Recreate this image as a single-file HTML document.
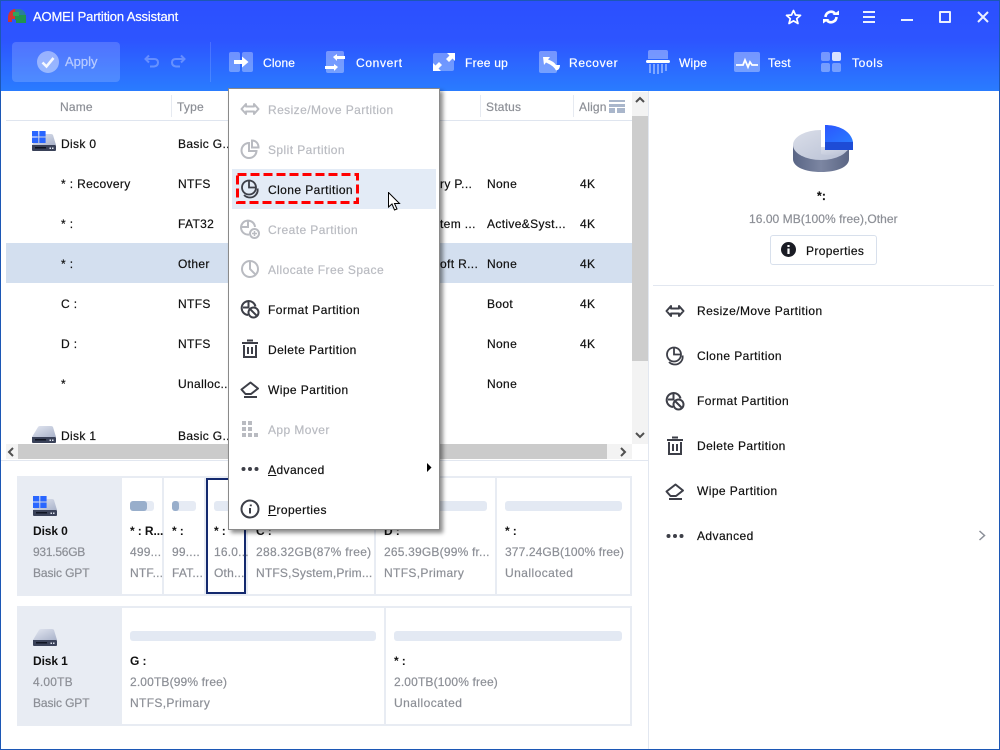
<!DOCTYPE html>
<html><head><meta charset="utf-8">
<style>
html,body{margin:0;padding:0;background:#fff}
#r{position:relative;width:1000px;height:750px;overflow:hidden;background:#fff;font-family:"Liberation Sans",sans-serif;font-size:12px;color:#111;letter-spacing:.35px;-webkit-text-stroke:.2px currentColor}
#r div,#r svg{position:absolute}
.t{white-space:nowrap;line-height:16px;height:16px}
.w{color:#fff;font-size:12px;letter-spacing:.65px}
.g{color:#8c8f96;letter-spacing:.2px}
.d{color:#b9bbc1}
.m{letter-spacing:.42px}
.b{font-weight:bold;letter-spacing:-.1px;-webkit-text-stroke:0}
u{text-underline-offset:1px}
</style></head><body>
<div id="r">
<svg width="0" height="0" style="position:absolute">
<defs>
<symbol id="resize" viewBox="0 0 20 20"><path d="M6 5 1.500 10 6 15V12.500H14V15L18.500 10 14 5V7.500H6Z" fill="none" stroke="currentColor" stroke-width="2" stroke-linejoin="round"/></symbol>
<symbol id="clone" viewBox="0 0 20 20"><g fill="none" stroke="currentColor" stroke-width="1.800"><circle cx="9" cy="8.500" r="7"/><path d="M9 2V8.500H15.500"/><path d="M17.500 9.500C18.500 14 15 18.500 10 18.500 7.500 18.500 5.500 17.500 4 16"/></g></symbol>
<symbol id="split" viewBox="0 0 20 20"><g fill="none" stroke="currentColor" stroke-width="2"><path d="M9 4A7.500 7.500 0 1 0 16.500 12H9Z"/><path d="M12 1.500V8.500H18.500C18.500 4.500 16 1.500 12 1.500Z"/></g></symbol>
<symbol id="create" viewBox="0 0 20 20"><g fill="none" stroke="currentColor" stroke-width="2"><path d="M8 1.500V8H1.500"/><path d="M9 15.500A7 7 0 1 1 15 8"/><circle cx="14.500" cy="14.500" r="4.500"/><path d="M14.500 12V17M12 14.500H17" stroke-width="1.500"/></g></symbol>
<symbol id="alloc" viewBox="0 0 20 20"><g fill="none" stroke="currentColor" stroke-width="2"><circle cx="10" cy="10" r="8"/><path d="M10 2V10L15.500 15.500"/></g></symbol>
<symbol id="format" viewBox="0 0 20 20"><g fill="none" stroke="currentColor" stroke-width="2"><path d="M8 16A7 7 0 1 1 15.500 7.500"/><path d="M8.500 1.500V8.500H3"/><circle cx="13.500" cy="13.500" r="5"/><path d="M10 10 17 17"/></g></symbol>
<symbol id="del" viewBox="0 0 20 20"><g fill="none" stroke="currentColor" stroke-width="2"><path d="M2 4H18"/><path d="M7 1.500H13"/><path d="M4 6V18H16V6"/><path d="M8 8V15M12 8V15"/></g></symbol>
<symbol id="wipe" viewBox="0 0 20 20"><g fill="none" stroke="currentColor" stroke-width="2" stroke-linejoin="round"><path d="M1.500 10.500 10.500 3.500 18 9.500 11 15H5.500Z"/><path d="M4 18H17"/></g></symbol>
<symbol id="dots" viewBox="0 0 20 20"><g fill="currentColor"><circle cx="3.500" cy="10" r="2"/><circle cx="10" cy="10" r="2"/><circle cx="16.500" cy="10" r="2"/></g></symbol>
<symbol id="info" viewBox="0 0 20 20"><circle cx="10" cy="10" r="8.500" fill="none" stroke="currentColor" stroke-width="2"/><path d="M10.800 5.500V7.200M10 9V14.500" stroke="currentColor" stroke-width="2"/></symbol>
<symbol id="app" viewBox="0 0 20 20"><g fill="currentColor"><rect x="2" y="2" width="4" height="4"/><rect x="8" y="2" width="4" height="4"/><rect x="2" y="8" width="4" height="4"/><rect x="8" y="8" width="4" height="4"/><rect x="14" y="14" width="4" height="4"/><rect x="2" y="14" width="4" height="4"/><rect x="8" y="14" width="4" height="4"/></g></symbol>
<linearGradient id="disk" x1="0" y1="0" x2="1" y2="1"><stop offset="0" stop-color="#e4e8f2"/><stop offset="1" stop-color="#a9b2c9"/></linearGradient>
<symbol id="hdd" viewBox="0 0 24 20"><path d="M6 2Q6.500 1 8 1H19Q20.500 1 21 2L24 12H0Z" fill="url(#disk)"/><path d="M0 12Q0 12 1 12H23Q24 12 24 13V17Q24 18 23 18H1Q0 18 0 17Z" fill="#3a4259"/><rect x="3" y="14" width="11" height="1.500" fill="#0f1422"/><rect x="17.500" y="14.500" width="1.500" height="1.500" fill="#dfe4ef"/><rect x="20" y="14.500" width="1.500" height="1.500" fill="#dfe4ef"/></symbol>
<symbol id="win" viewBox="0 0 14 12"><g fill="#2a66ff"><rect width="6.300" height="5.500"/><rect x="7.300" width="6.300" height="5.500"/><rect y="6.500" width="6.300" height="5.500"/><rect x="7.300" y="6.500" width="6.300" height="5.500"/></g></symbol>
<linearGradient id="pieg" x1="0" y1="0" x2="1" y2="1"><stop offset="0" stop-color="#dadee9"/><stop offset="1" stop-color="#b8c0d4"/></linearGradient>
<linearGradient id="pies" x1="0" y1="0" x2="1" y2="0"><stop offset="0" stop-color="#596585"/><stop offset=".5" stop-color="#7c86a2"/><stop offset="1" stop-color="#5b6684"/></linearGradient>
<linearGradient id="pieb" x1="0" y1="0" x2="1" y2="1"><stop offset="0" stop-color="#2b56ff"/><stop offset="1" stop-color="#2a7bff"/></linearGradient>
</defs>
</svg>

<!-- header -->
<div style="left:0;top:0;width:1000px;height:91px;background:linear-gradient(#2c4fff 0,#2d55ff 45%,#2a7cff 100%)"></div>
<div style="left:0;top:0;width:1000px;height:1px;background:#1c57b5"></div>
<div style="left:0;top:0;width:1px;height:750px;background:#1c57b5"></div>
<div style="left:999px;top:0;width:1px;height:750px;background:#1c57b5"></div>
<div style="left:0;top:749px;width:1000px;height:1px;background:#1c57b5"></div>

<svg style="left:7px;top:8px" width="20" height="17" viewBox="0 0 20 17"><path d="M1 10Q1 3 7 1H10V11H5V14H1Z" fill="#d3352f"/><path d="M8 1H13Q18 2 19 8H9Z" fill="#2a7f9a"/><path d="M8 7H19V15H9V12H8Z" fill="#21934f"/><path d="M6 4H12V8H6Z" fill="#31a35c"/></svg>
<div class="t" style="left:33px;top:9px;color:#fff;font-size:13px;letter-spacing:-.15px">AOMEI Partition Assistant</div>

<div style="left:12px;top:42px;width:108px;height:40px;border-radius:4px;background:rgba(255,255,255,.17)"></div>
<svg style="left:37px;top:51px" width="22" height="22" viewBox="0 0 22 22"><circle cx="11" cy="11" r="11" fill="#fff" fill-opacity=".42"/><path d="M5.500 11.500 9.500 15.500 16.500 7" fill="none" stroke="#fff" stroke-opacity=".9" stroke-width="2.600"/></svg>
<div class="t w" style="left:65px;top:54px;color:rgba(255,255,255,.55);font-size:13px;letter-spacing:0">Apply</div>
<svg style="left:144px;top:54px" width="16" height="14" viewBox="0 0 16 14"><path d="M5 1.500 1.500 5 5 8.500M2 5H10Q14 5 14 8.500T10 12.500H6" fill="none" stroke="#fff" stroke-opacity=".28" stroke-width="2"/></svg>
<svg style="left:170px;top:54px" width="16" height="14" viewBox="0 0 16 14"><path d="M11 1.500 14.500 5 11 8.500M14 5H6Q2 5 2 8.500T6 12.500H10" fill="none" stroke="#fff" stroke-opacity=".28" stroke-width="2"/></svg>
<div style="left:210px;top:42px;width:1px;height:40px;background:rgba(255,255,255,.14)"></div>

<!-- toolbar icons -->
<svg style="left:229px;top:52px" width="24" height="20" viewBox="0 0 24 20"><rect width="11" height="20" rx="2" fill="#fff" fill-opacity=".32"/><rect x="13" width="11" height="20" rx="2" fill="#fff" fill-opacity=".32"/><path d="M5 8H13V4.500L19.500 10 13 15.500V12H5Z" fill="#fff"/></svg>
<div class="t w" style="left:263px;top:55px;letter-spacing:.15px">Clone</div>
<svg style="left:325px;top:51px" width="21" height="22" viewBox="0 0 21 22"><rect x="1" width="18" height="22" rx="2" fill="#fff" fill-opacity=".35"/><path d="M8 6 12 3V5H20V8H12V10Z" fill="#fff"/><path d="M13 16 9 13V15H0V18H9V20Z" fill="#fff"/></svg>
<div class="t w" style="left:356px;top:55px">Convert</div>
<svg style="left:433px;top:53px" width="22" height="18" viewBox="0 0 22 18"><rect width="21" height="18" rx="2" x="0" y="0" fill="#fff" fill-opacity=".32"/><path d="M0 18V10L2.500 12.500 6 9 9 12 5.500 15.500 8 18ZM22 0V8L19.500 5.500 16 9 13 6 16.500 2.500 14 0Z" fill="#fff"/></svg>
<div class="t w" style="left:465px;top:55px;letter-spacing:.25px">Free up</div>
<svg style="left:539px;top:51px" width="22" height="22" viewBox="0 0 22 22"><rect width="18" height="22" rx="2" fill="#fff" fill-opacity=".35"/><path d="M4 6H11L9 8.500Q15 10.500 17 14H21Q21 19 17 19.500 15 15 7 11.500L5 14Z" fill="#fff"/></svg>
<div class="t w" style="left:569px;top:55px">Recover</div>
<svg style="left:646px;top:50px" width="24" height="24" viewBox="0 0 24 24"><path d="M2 2Q2 0 4 0H20Q22 0 22 2V9H2Z" fill="#fff" fill-opacity=".35"/><rect y="10" width="24" height="3" rx="1.500" fill="#fff"/><g fill="#fff" fill-opacity=".4"><rect x="3" y="14" width="2" height="9"/><rect x="7" y="14" width="2" height="10"/><rect x="11" y="14" width="2" height="10"/><rect x="15" y="14" width="2" height="9"/><rect x="19" y="14" width="2" height="7"/></g></svg>
<div class="t w" style="left:679px;top:55px;letter-spacing:.2px">Wipe</div>
<svg style="left:734px;top:52px" width="26" height="20" viewBox="0 0 26 20"><rect width="26" height="20" rx="2" fill="#fff" fill-opacity=".35"/><path d="M2 13H9L11 8 14 15 16 10 18 13H24" fill="none" stroke="#fff" stroke-width="1.800"/></svg>
<div class="t w" style="left:768px;top:55px;letter-spacing:.2px">Test</div>
<svg style="left:821px;top:52px" width="20" height="20" viewBox="0 0 20 20"><rect width="9" height="9" rx="2" fill="#fff" fill-opacity=".35"/><rect x="11" width="9" height="9" rx="2" fill="#fff" fill-opacity=".82"/><rect y="11" width="9" height="9" rx="2" fill="#fff" fill-opacity=".35"/><rect x="11" y="11" width="9" height="9" rx="2" fill="#fff" fill-opacity=".35"/></svg>
<div class="t w" style="left:852px;top:55px">Tools</div>

<!-- window controls -->
<svg style="left:785px;top:9px" width="17" height="16" viewBox="0 0 17 16"><path d="M8.500 1.500 10.500 6 15.500 6.400 11.700 9.600 13 14.500 8.500 11.900 4 14.500 5.300 9.600 1.500 6.400 6.500 6Z" fill="none" stroke="#fff" stroke-width="1.700" stroke-linejoin="round"/></svg>
<svg style="left:823px;top:9px" width="16" height="16" viewBox="0 0 16 16"><g fill="none" stroke="#fff" stroke-width="2.600"><path d="M2.500 8A5.500 5.500 0 0 1 12 4.500"/><path d="M13.500 8A5.500 5.500 0 0 1 4 11.500"/></g><path d="M9.500 6H16V1.500ZM6.500 10H0V14.500Z" fill="#fff"/></svg>
<div style="left:863px;top:11px;width:12px;height:2px;background:#eaf0ff"></div>
<div style="left:863px;top:16px;width:12px;height:2px;background:#eaf0ff"></div>
<div style="left:863px;top:21px;width:12px;height:2px;background:#eaf0ff"></div>
<div style="left:901px;top:19px;width:12px;height:2px;background:#eaf0ff"></div>
<div style="left:939px;top:11px;width:8px;height:8px;border:2px solid #eaf0ff;border-radius:1px"></div>
<svg style="left:977px;top:11px" width="12" height="12" viewBox="0 0 12 12"><path d="M1 1 11 11M11 1 1 11" stroke="#eaf0ff" stroke-width="2"/></svg>

<!-- table header -->
<div style="left:6px;top:120px;width:626px;height:1px;background:#dfe5ef"></div>
<div style="left:171px;top:95px;width:1px;height:22px;background:#e6eaf1"></div>
<div style="left:480px;top:95px;width:1px;height:22px;background:#e6eaf1"></div>
<div style="left:573px;top:95px;width:1px;height:22px;background:#e6eaf1"></div>
<div class="t g" style="left:60px;top:99px">Name</div>
<div class="t g" style="left:177px;top:99px">Type</div>
<div class="t g" style="left:486px;top:99px">Status</div>
<div class="t g" style="left:579px;top:99px;width:27px;overflow:hidden">Align</div>
<div style="left:609px;top:100px;width:16px;height:2px;background:#a9b6cb"></div>
<div style="left:609px;top:104px;width:16px;height:3px;background:#a9b6cb"></div>
<div style="left:609px;top:108px;width:6px;height:5px;background:#a9b6cb"></div>
<div style="left:617px;top:108px;width:8px;height:5px;background:#a9b6cb"></div>

<!-- rows -->
<div style="left:6px;top:243px;width:626px;height:40px;background:#d3dfef"></div>
<svg style="left:32px;top:133px" width="24" height="20" viewBox="0 0 24 20"><use href="#hdd"/></svg>
<svg style="left:32px;top:131px" width="14" height="12" viewBox="0 0 14 12"><use href="#win"/></svg>
<div class="t" style="left:61px;top:136px">Disk 0</div><div class="t" style="left:178px;top:136px">Basic G...</div>
<div class="t" style="left:61px;top:176px">* : Recovery</div><div class="t" style="left:178px;top:176px">NTFS</div>
<div class="t" style="left:61px;top:216px">* :</div><div class="t" style="left:178px;top:216px">FAT32</div>
<div class="t" style="left:61px;top:256px">* :</div><div class="t" style="left:178px;top:256px">Other</div>
<div class="t" style="left:61px;top:296px">C :</div><div class="t" style="left:178px;top:296px">NTFS</div>
<div class="t" style="left:61px;top:336px">D :</div><div class="t" style="left:178px;top:336px">NTFS</div>
<div class="t" style="left:61px;top:376px">*</div><div class="t" style="left:178px;top:376px">Unalloc...</div>
<svg style="left:32px;top:425px" width="24" height="20" viewBox="0 0 24 20"><use href="#hdd"/></svg>
<div class="t" style="left:61px;top:428px">Disk 1</div><div class="t" style="left:178px;top:428px">Basic G...</div>
<div class="t" style="left:440px;top:176px">ry P...</div><div class="t" style="left:487px;top:176px">None</div><div class="t" style="left:580px;top:176px">4K</div>
<div class="t" style="left:440px;top:216px">tem ...</div><div class="t" style="left:487px;top:216px">Active&amp;Syst...</div><div class="t" style="left:580px;top:216px">4K</div>
<div class="t" style="left:440px;top:256px">oft R...</div><div class="t" style="left:487px;top:256px">None</div><div class="t" style="left:580px;top:256px">4K</div>
<div class="t" style="left:487px;top:296px">Boot</div><div class="t" style="left:580px;top:296px">4K</div>
<div class="t" style="left:487px;top:336px">None</div><div class="t" style="left:580px;top:336px">4K</div>
<div class="t" style="left:487px;top:376px">None</div>

<!-- scrollbars -->
<div style="left:632px;top:92px;width:16px;height:352px;background:#f3f3f3"></div>
<div style="left:632px;top:116px;width:16px;height:245px;background:#cdcdcd"></div>
<svg style="left:635px;top:96px" width="10" height="8" viewBox="0 0 10 8"><path d="M1 6 5 2 9 6" fill="none" stroke="#505050" stroke-width="2"/></svg>
<svg style="left:635px;top:431px" width="10" height="8" viewBox="0 0 10 8"><path d="M1 2 5 6 9 2" fill="none" stroke="#505050" stroke-width="2"/></svg>
<div style="left:6px;top:444px;width:626px;height:15px;background:#f3f3f3"></div>
<div style="left:18px;top:444px;width:589px;height:15px;background:#cbcbcb"></div>
<svg style="left:7px;top:447px" width="8" height="10" viewBox="0 0 8 10"><path d="M6 1 2 5 6 9" fill="none" stroke="#505050" stroke-width="2"/></svg>
<svg style="left:619px;top:447px" width="8" height="10" viewBox="0 0 8 10"><path d="M2 1 6 5 2 9" fill="none" stroke="#505050" stroke-width="2"/></svg>
<div style="left:1px;top:460px;width:647px;height:1px;background:#e2e7f0"></div>
<div style="left:648px;top:91px;width:1px;height:658px;background:#e2e7f0"></div>

<!-- disk 0 map -->
<div style="left:17px;top:476px;width:615px;height:120px;background:#e8ecf3"></div>
<div style="left:122px;top:478px;width:40px;height:116px;background:#fff"></div>
<div style="left:164px;top:478px;width:40px;height:116px;background:#fff"></div>
<div style="left:206px;top:478px;width:36px;height:112px;background:#fff;border:2px solid #14296e"></div>
<div style="left:248px;top:478px;width:126px;height:116px;background:#fff"></div>
<div style="left:376px;top:478px;width:119px;height:116px;background:#fff"></div>
<div style="left:497px;top:478px;width:133px;height:116px;background:#fff"></div>
<svg style="left:33px;top:498px" width="24" height="20" viewBox="0 0 24 20"><use href="#hdd"/></svg>
<svg style="left:33px;top:496px" width="14" height="12" viewBox="0 0 14 12"><use href="#win"/></svg>
<div class="t b" style="left:33px;top:523px">Disk 0</div>
<div class="t g" style="left:33px;top:544px;letter-spacing:-.25px">931.56GB</div>
<div class="t g" style="left:33px;top:565px;letter-spacing:-.1px">Basic GPT</div>

<div style="left:130px;top:501px;width:24px;height:10px;border-radius:3px;background:#e6ebf4"></div><div style="left:130px;top:501px;width:17px;height:10px;border-radius:3px;background:#98aecb"></div>
<div style="left:172px;top:501px;width:24px;height:10px;border-radius:3px;background:#e6ebf4"></div><div style="left:172px;top:501px;width:7px;height:10px;border-radius:3px;background:#98aecb"></div>
<div style="left:214px;top:501px;width:24px;height:10px;border-radius:3px;background:#e3e9f3"></div>
<div style="left:256px;top:501px;width:110px;height:10px;border-radius:3px;background:#e3e9f3"></div>
<div style="left:384px;top:501px;width:103px;height:10px;border-radius:3px;background:#e3e9f3"></div>
<div style="left:505px;top:501px;width:117px;height:10px;border-radius:3px;background:#e3e9f3"></div>

<div class="t b" style="left:130px;top:523px">* : R...</div>
<div class="t g" style="left:130px;top:544px">499...</div><div class="t g" style="left:130px;top:565px">NTF...</div>
<div class="t b" style="left:172px;top:523px">* :</div>
<div class="t g" style="left:172px;top:544px">99....</div><div class="t g" style="left:172px;top:565px">FAT...</div>
<div class="t b" style="left:214px;top:523px">* :</div>
<div class="t g" style="left:214px;top:544px">16.0...</div><div class="t g" style="left:214px;top:565px">Oth...</div>
<div class="t b" style="left:256px;top:523px">C :</div>
<div class="t g" style="left:256px;top:544px;letter-spacing:.3px">288.32GB(87% free)</div><div class="t g" style="left:256px;top:565px;letter-spacing:.2px">NTFS,System,Prim...</div>
<div class="t b" style="left:384px;top:523px">D :</div>
<div class="t g" style="left:384px;top:544px;letter-spacing:.2px">265.39GB(99% fr...</div><div class="t g" style="left:384px;top:565px;letter-spacing:.35px">NTFS,Primary</div>
<div class="t b" style="left:505px;top:523px">* :</div>
<div class="t g" style="left:505px;top:544px;letter-spacing:.12px">377.24GB(100% free)</div><div class="t g" style="left:505px;top:565px;letter-spacing:.45px">Unallocated</div>

<!-- disk 1 map -->
<div style="left:17px;top:606px;width:615px;height:120px;background:#e8ecf3"></div>
<div style="left:122px;top:608px;width:262px;height:116px;background:#fff"></div>
<div style="left:386px;top:608px;width:244px;height:116px;background:#fff"></div>
<svg style="left:33px;top:628px" width="24" height="20" viewBox="0 0 24 20"><use href="#hdd"/></svg>
<div class="t b" style="left:33px;top:653px">Disk 1</div>
<div class="t g" style="left:33px;top:674px">4.00TB</div>
<div class="t g" style="left:33px;top:695px;letter-spacing:-.1px">Basic GPT</div>
<div style="left:130px;top:631px;width:246px;height:10px;border-radius:3px;background:#e3e9f3"></div>
<div style="left:394px;top:631px;width:228px;height:10px;border-radius:3px;background:#e3e9f3"></div>
<div class="t b" style="left:130px;top:653px">G :</div>
<div class="t g" style="left:130px;top:674px;letter-spacing:.15px">2.00TB(99% free)</div><div class="t g" style="left:130px;top:695px;letter-spacing:.35px">NTFS,Primary</div>
<div class="t b" style="left:394px;top:653px">* :</div>
<div class="t g" style="left:394px;top:674px;letter-spacing:.15px">2.00TB(100% free)</div><div class="t g" style="left:394px;top:695px;letter-spacing:.45px">Unallocated</div>

<!-- right panel -->
<svg style="left:790px;top:124px" width="66" height="52" viewBox="0 0 66 52">
<path d="M3 21V35C3 43 15 48 31 48S59 43 59 35V21Z" fill="url(#pies)"/>
<ellipse cx="31" cy="21" rx="28" ry="15" fill="url(#pieg)"/>
<path d="M31 2V23H65V10Z" fill="#fff"/>
<path d="M31 23H59V25C52 32 38 32 31 30Z" fill="url(#pieg)"/>
<path d="M35 1C49 1 61 7 63 18H35Z" fill="url(#pieb)"/>
<path d="M35 18H63V26H35Z" fill="#1e4cd6"/>
<rect x="31" y="1" width="4" height="22" fill="#fff"/>
</svg>
<div class="t" style="left:817px;top:188px;font-weight:bold;letter-spacing:.2px">*:</div>
<div class="t g" style="left:749px;top:211px;letter-spacing:.05px">16.00 MB(100% free),Other</div>
<div style="left:770px;top:235px;width:105px;height:28px;border:1px solid #d8e0ec;border-radius:3px"></div>
<svg style="left:781px;top:242px" width="15" height="15" viewBox="0 0 15 15"><circle cx="7.500" cy="7.500" r="7.500" fill="#1a1c24"/><path d="M7.500 3V5M7.500 6.500V12" stroke="#fff" stroke-width="2.200"/></svg>
<div class="t" style="left:806px;top:243px">Properties</div>
<div style="left:653px;top:285px;width:341px;height:1px;background:#e2e7f0"></div>

<svg style="left:665px;top:301px;color:#3d3f48" width="20" height="20"><use href="#resize"/></svg><div class="t m" style="left:697px;top:303px">Resize/Move Partition</div>
<svg style="left:665px;top:346px;color:#3d3f48" width="20" height="20"><use href="#clone"/></svg><div class="t m" style="left:697px;top:348px">Clone Partition</div>
<svg style="left:665px;top:391px;color:#3d3f48" width="20" height="20"><use href="#format"/></svg><div class="t m" style="left:697px;top:393px">Format Partition</div>
<svg style="left:665px;top:436px;color:#3d3f48" width="20" height="20"><use href="#del"/></svg><div class="t m" style="left:697px;top:438px">Delete Partition</div>
<svg style="left:665px;top:481px;color:#3d3f48" width="20" height="20"><use href="#wipe"/></svg><div class="t m" style="left:697px;top:483px">Wipe Partition</div>
<svg style="left:665px;top:526px;color:#3d3f48" width="20" height="20"><use href="#dots"/></svg><div class="t m" style="left:697px;top:528px">Advanced</div>
<svg style="left:978px;top:530px" width="8" height="11" viewBox="0 0 8 11"><path d="M1.500 1 6.500 5.500 1.500 10" fill="none" stroke="#8b8f98" stroke-width="1.500"/></svg>

<!-- context menu -->
<div style="left:228px;top:88px;width:210px;height:440px;background:#fff;border:1px solid #8a8a8a;box-shadow:3px 3px 4px rgba(0,0,0,.45)"></div>
<div style="left:232px;top:169px;width:204px;height:40px;background:#e3ebf6"></div>
<svg style="left:236px;top:173px" width="124" height="32" viewBox="0 0 124 32"><rect x="1.500" y="1.500" width="120" height="28" fill="none" stroke="#ff0000" stroke-width="3" stroke-dasharray="9 4"/></svg>

<svg style="left:240px;top:99px;color:#b9bbc1" width="20" height="20"><use href="#resize"/></svg><div class="t d m" style="left:268px;top:102px">Resize/Move Partition</div>
<svg style="left:240px;top:139px;color:#b9bbc1" width="20" height="20"><use href="#split"/></svg><div class="t d m" style="left:268px;top:142px">Split Partition</div>
<svg style="left:240px;top:179px;color:#3d3f48" width="20" height="20"><use href="#clone"/></svg><div class="t m" style="left:268px;top:182px">Clone Partition</div>
<svg style="left:240px;top:219px;color:#b9bbc1" width="20" height="20"><use href="#create"/></svg><div class="t d m" style="left:268px;top:222px">Create Partition</div>
<svg style="left:240px;top:259px;color:#b9bbc1" width="20" height="20"><use href="#alloc"/></svg><div class="t d m" style="left:268px;top:262px">Allocate Free Space</div>
<svg style="left:240px;top:299px;color:#3d3f48" width="20" height="20"><use href="#format"/></svg><div class="t m" style="left:268px;top:302px">Format Partition</div>
<svg style="left:240px;top:339px;color:#3d3f48" width="20" height="20"><use href="#del"/></svg><div class="t m" style="left:268px;top:342px">Delete Partition</div>
<svg style="left:240px;top:379px;color:#3d3f48" width="20" height="20"><use href="#wipe"/></svg><div class="t m" style="left:268px;top:382px">Wipe Partition</div>
<svg style="left:240px;top:419px;color:#b9bbc1" width="20" height="20"><use href="#app"/></svg><div class="t d m" style="left:268px;top:422px">App Mover</div>
<svg style="left:240px;top:459px;color:#3d3f48" width="20" height="20"><use href="#dots"/></svg><div class="t m" style="left:268px;top:462px"><u>A</u>dvanced</div>
<svg style="left:426px;top:463px" width="6" height="9" viewBox="0 0 6 9"><path d="M1 0 5.500 4.500 1 9Z" fill="#000"/></svg>
<svg style="left:240px;top:499px;color:#3d3f48" width="20" height="20"><use href="#info"/></svg><div class="t m" style="left:268px;top:502px"><u>P</u>roperties</div>

<!-- cursor -->
<svg style="left:388px;top:192px" width="13" height="20" viewBox="0 0 13 20"><path d="M.5.500V15L4 12 6.500 18 9 17 6.500 11.500H11.500Z" fill="#fff" stroke="#000" stroke-width="1"/></svg>
</div>
</body></html>
